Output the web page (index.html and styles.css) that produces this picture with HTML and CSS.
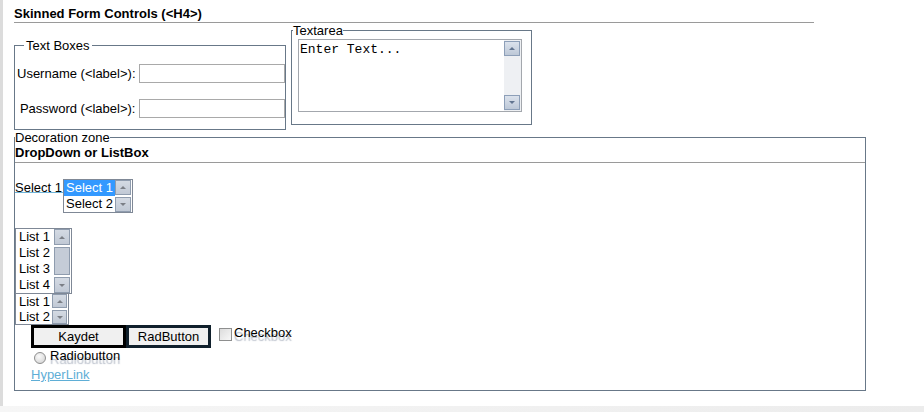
FILE: index.html
```html
<!DOCTYPE html>
<html lang="en">
<head>
    <meta charset="UTF-8">
    <title>Skinned Form Controls</title>
    <link rel="stylesheet" href="styles.css">
</head>
<body>
    <div class="page">
        <h4 class="title">Skinned Form Controls (&lt;H4&gt;)</h4>

        <div class="top-row">
            <fieldset class="fs fs-text">
                <legend>Text Boxes</legend>
                <div class="field-grid">
                    <label for="username">Username (&lt;label&gt;):</label>
                    <input id="username" class="text-input" type="text">
                    <label for="password">Password (&lt;label&gt;):</label>
                    <input id="password" class="text-input" type="password">
                </div>
            </fieldset>

            <fieldset class="fs fs-area">
                <legend>Textarea</legend>
                <div class="area-box">
                    <textarea class="area">Enter Text...</textarea>
                    <div class="vscroll">
                        <span class="sb-btn"><i class="arrow up"></i></span>
                        <span class="sb-btn"><i class="arrow down"></i></span>
                    </div>
                </div>
            </fieldset>
        </div>

        <fieldset class="fs fs-deco">
            <legend>Decoration zone</legend>
            <div class="sub-title">DropDown or ListBox</div>

            <div class="select-row">
                <span class="select-label">Select 1</span>
                <div class="listbox">
                    <div class="items items-select">
                        <div class="item selected">Select 1</div>
                        <div class="item">Select 2</div>
                    </div>
                    <div class="lb-scroll">
                        <span class="sb-btn grey"><i class="arrow up"></i></span>
                        <span class="sb-btn grey"><i class="arrow down"></i></span>
                    </div>
                </div>
            </div>

            <div class="listbox list-one">
                <div class="items">
                    <div class="item">List 1</div>
                    <div class="item">List 2</div>
                    <div class="item">List 3</div>
                    <div class="item">List 4</div>
                </div>
                <div class="lb-scroll">
                    <span class="sb-btn grey"><i class="arrow up"></i></span>
                    <span class="thumb"></span>
                    <span class="sb-btn grey"><i class="arrow down"></i></span>
                </div>
            </div>

            <div class="listbox list-two">
                <div class="items">
                    <div class="item">List 1</div>
                    <div class="item">List 2</div>
                </div>
                <div class="lb-scroll">
                    <span class="sb-btn grey"><i class="arrow up"></i></span>
                    <span class="sb-btn grey"><i class="arrow down"></i></span>
                </div>
            </div>

            <div class="btn-row">
                <button class="btn btn-save">Kaydet</button>
                <button class="btn btn-rad">RadButton</button>
                <label class="check">
                    <input type="checkbox" class="check-box">
                    <span class="ghost">Checkbox</span>
                </label>
            </div>

            <label class="radio-row">
                <input type="radio" class="radio">
                <span class="ghost">Radiobutton</span>
            </label>

            <div class="link-row">
                <a href="#" class="link">HyperLink</a>
            </div>
        </fieldset>
    </div>
    <div class="footer"></div>
</body>
</html>
```

FILE: styles.css
```css
* {
    box-sizing: border-box;
}
html, body {
    margin: 0;
}
body {
    width: 924px;
    height: 412px;
    overflow: hidden;
    font-family: "Liberation Sans", Arial, sans-serif;
    font-size: 13px;
    line-height: 15px;
    color: #000;
    background: #fff;
}
.page {
    height: 406px;
    padding-left: 11px;
    border-left: 3px solid #dcdcdc;
}
.footer {
    height: 6px;
    background: linear-gradient(to right, #f6f6f6, #ececec);
}

.title {
    width: 800px;
    margin: 0;
    padding: 6px 0 1px;
    font-size: 13px;
    font-weight: bold;
    border-bottom: 1px solid #9a9a9a;
}

/* fieldsets */
.fs {
    margin: 0;
    min-width: 0;
    border: 1px solid #687888;
}
.fs legend {
    padding: 0;
    line-height: 15px;
}
.top-row {
    display: flex;
    align-items: flex-start;
    gap: 5px;
}
.fs-text {
    width: 272px;
    margin-top: 15px;
    padding: 11px 0 11px 2px;
}
.fs-text legend {
    padding: 0 2px;
    margin-left: 7px;
}
.field-grid {
    display: grid;
    grid-template-columns: auto 1fr;
    column-gap: 3px;
    row-gap: 16px;
    align-items: center;
}
.field-grid label {
    text-align: right;
}
.text-input {
    height: 19px;
    width: 100%;
    margin: 0;
    border: 1px solid #a9a9a9;
    font: inherit;
}

.fs-area {
    width: 241px;
    padding: 1px 9px 12px 0;
}
.fs-area legend {
    margin-left: 1px;
}
.area-box {
    display: flex;
    height: 73px;
    margin-left: 6px;
    border: 1px solid #a3a7ad;
}
.area {
    flex: 1;
    margin: 0;
    padding: 2px 0 0 1px;
    border: none;
    outline: none;
    resize: none;
    overflow: hidden;
    font-family: "Liberation Mono", "Courier New", monospace;
    font-size: 13px;
    line-height: 15px;
    color: #000;
}
.vscroll {
    width: 17px;
    display: flex;
    flex-direction: column;
    justify-content: space-between;
    padding: 1px 1px 1px 0;
    background: #eef0f3;
}

/* scrollbar parts */
.sb-btn {
    display: flex;
    align-items: center;
    justify-content: center;
    height: 15px;
    border: 1px solid #8d9fb8;
    background: linear-gradient(#dbe2ec, #bdc8d7);
}
.sb-btn.grey {
    border-color: #8f9cae;
    background: linear-gradient(#d4dae3, #c1c9d5);
}
.arrow {
    width: 0;
    height: 0;
    border-left: 3px solid transparent;
    border-right: 3px solid transparent;
}
.arrow.up {
    border-bottom: 3px solid #627590;
}
.arrow.down {
    border-top: 3px solid #627590;
}
.grey .arrow.up {
    border-bottom-color: #7b7f86;
}
.grey .arrow.down {
    border-top-color: #7b7f86;
}
.thumb {
    flex: 1;
    margin: 2px 0;
    border: 1px solid #8f9cae;
    background: #c5ccd7;
}

/* decoration zone */
.fs-deco {
    width: 852px;
    padding: 0 0 8px;
}
.sub-title {
    font-weight: bold;
    padding-bottom: 2px;
    border-bottom: 1px solid #9a9a9a;
}
.select-row {
    display: flex;
    align-items: baseline;
    margin-top: 16px;
}
.select-label {
    padding-right: 1px;
    background: linear-gradient(#6fb3d6, #6fb3d6) no-repeat 0 12px / 100% 1px;
}
.listbox {
    display: flex;
    width: max-content;
    border: 1px solid #7f8896;
    background: #fff;
}
.items {
    display: flex;
    flex-direction: column;
}
.item {
    height: 16px;
    line-height: 16px;
    padding: 0 2px;
    white-space: nowrap;
}
.item.selected {
    background: #3399ff;
    color: #fff;
}
.lb-scroll {
    width: 17px;
    display: flex;
    flex-direction: column;
    justify-content: space-between;
    padding: 0 1px 0 0;
}
.items-select + .lb-scroll .sb-btn {
    height: 15px;
}
.list-one {
    margin-top: 15px;
}
.list-one .items {
    width: 38px;
    padding-left: 1px;
}
.list-one .sb-btn {
    height: 16px;
}
.list-two {
    margin-top: -1px;
}
.list-two .items {
    width: 36px;
    padding-left: 1px;
}
.list-two .item {
    height: 15px;
    line-height: 15px;
}
.list-two .lb-scroll {
    width: 16px;
}
.list-two .sb-btn {
    height: 14px;
}

/* buttons and toggles */
.btn-row {
    display: flex;
    align-items: flex-start;
    padding-left: 16px;
}
.btn {
    height: 23px;
    margin: 0;
    padding: 0;
    font: inherit;
    color: #000;
    background: #f0f0f0;
    border: 3px solid #000;
}
.btn-save {
    width: 95px;
}
.btn-rad {
    width: 85px;
    border-color: #10202c;
}
.check {
    display: flex;
    align-items: flex-start;
    margin-left: 8px;
}
.check-box {
    appearance: none;
    width: 13px;
    height: 13px;
    margin: 3px 2px 0 0;
    border: 1px solid #8e8f8f;
    background: linear-gradient(135deg, #dcdcdc, #f8f8f8);
}
.ghost {
    text-shadow: 0 4px 1px rgba(130, 140, 160, 0.55);
}
.radio-row {
    display: flex;
    align-items: flex-start;
    height: 16px;
    padding-left: 19px;
}
.radio {
    appearance: none;
    width: 12px;
    height: 12px;
    margin: 4px 4px 0 0;
    border: 1px solid #8e8e8e;
    border-radius: 50%;
    background: radial-gradient(circle at 40% 35%, #fafafa, #cfcfcf);
}
.link-row {
    margin-top: 3px;
    padding-left: 16px;
}
.link {
    color: #5faed6;
}
```
